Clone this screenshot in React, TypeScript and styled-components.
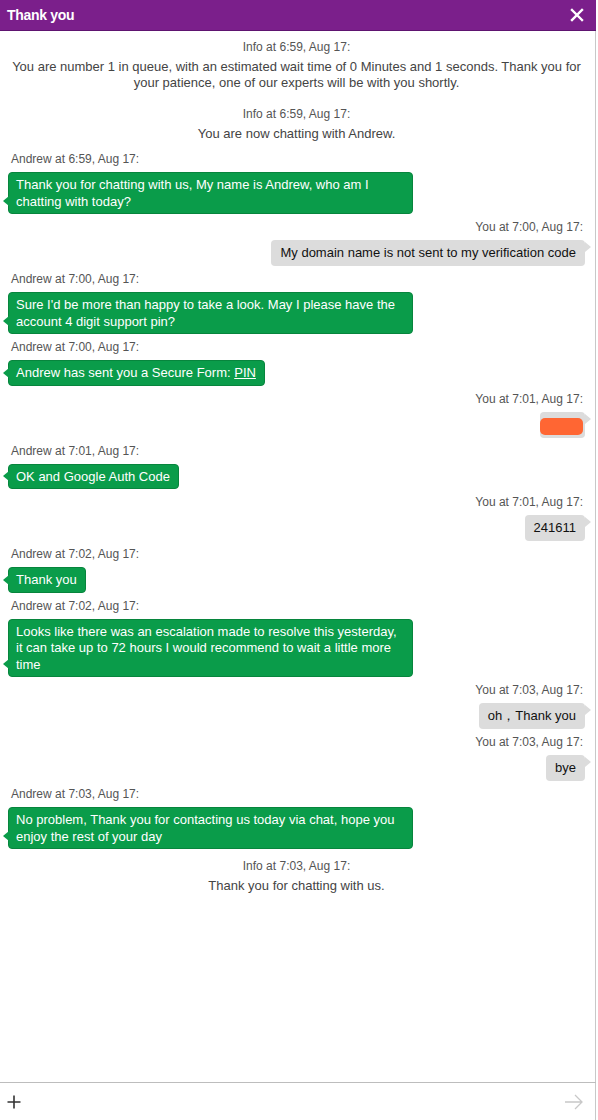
import React from "react";
import styled, { createGlobalStyle } from "styled-components";

const GlobalStyle = createGlobalStyle`
  html, body { margin: 0; padding: 0; background: #fff; }
  body { font-family: "Liberation Sans", Arial, sans-serif; }
  * { box-sizing: border-box; }
`;

const Panel = styled.div`
  width: 596px;
  height: 1120px;
  display: flex;
  flex-direction: column;
  border-right: 1px solid #c8c8c8;
  background: #fff;
`;

const Header = styled.div`
  height: 31px;
  flex: none;
  margin-right: -1px;
  background: #7b1f8b;
  display: flex;
  align-items: center;
  justify-content: space-between;
  padding: 0 12px 0 7px;
  border-bottom: 1px solid #5e1470;
`;

const Title = styled.div`
  color: #fff;
  font-weight: bold;
  font-size: 14px;
  letter-spacing: -0.3px;
`;

const CloseBtn = styled.button`
  border: none;
  background: none;
  padding: 0;
  width: 14px;
  height: 14px;
  display: flex;
  cursor: pointer;
`;

const Messages = styled.div`
  flex: 1;
  display: flex;
  flex-direction: column;
  gap: 5px;
  padding: 4px 10px 0 8px;
`;

const Info = styled.div`
  margin: 4px 0;
  display: flex;
  flex-direction: column;
  gap: 4px;
  align-items: center;
  text-align: center;
  color: #444;
  font-size: 13px;
  line-height: 16px;
  padding: 0 4px;
  & + & {
    margin-top: 6px;
  }
`;

const Label = styled.div<{ $side: "agent" | "you" | "info" }>`
  font-size: 12px;
  line-height: 16px;
  color: #555;
  padding: ${(p) => (p.$side === "agent" ? "0 0 0 3px" : p.$side === "you" ? "0 2px 0 0" : "0")};
`;

const Group = styled.div<{ $side: "agent" | "you" }>`
  display: flex;
  flex-direction: column;
  gap: 5px;
  align-items: ${(p) => (p.$side === "agent" ? "flex-start" : "flex-end")};
`;

const Bubble = styled.div<{ $side: "agent" | "you"; $redacted?: boolean }>`
  position: relative;
  max-width: 405px;
  font-size: 13px;
  border-radius: 4px;
  ${(p) =>
    p.$side === "agent"
      ? `
    line-height: 16.5px;
    background: #0a9c4a;
    border: 1px solid #07853d;
    color: #fff;
    padding: 4px 8px 3px 7px;
  `
      : `
    line-height: 16px;
    background: #dcdcdc;
    color: #111;
    padding: ${p.$redacted ? "6px 2px 3px 0" : "5px 9px 5px 9px"};
  `}
  &::after {
    content: "";
    position: absolute;
    width: 0;
    height: 0;
    border-style: solid;
    ${(p) =>
      p.$side === "agent"
        ? `
      left: -6px;
      bottom: 7px;
      border-width: 5px 6px 5px 0;
      border-color: transparent #0a9c4a transparent transparent;
    `
        : `
      right: -6px;
      top: 2px;
      border-width: 5px 0 5px 6px;
      border-color: transparent transparent transparent #dcdcdc;
    `}
  }
`;

const Redaction = styled.div`
  width: 43px;
  height: 17px;
  border-radius: 5px;
  background: #ff6633;
`;

const Link = styled.a`
  color: #fff;
  text-decoration: underline;
`;

const Footer = styled.div`
  flex: none;
  height: 38px;
  margin-right: -1px;
  border-top: 1px solid #bdbdbd;
  display: flex;
  align-items: center;
  justify-content: space-between;
  padding: 0 12px 0 7px;
`;

const IconBtn = styled.button`
  border: none;
  background: none;
  padding: 0;
  display: flex;
  cursor: pointer;
`;

type Msg =
  | { kind: "info"; time: string; text: string }
  | { kind: "agent"; time: string; text: React.ReactNode }
  | { kind: "you"; time: string; text?: string; redacted?: boolean };

const msgs: Msg[] = [
  {
    kind: "info",
    time: "6:59, Aug 17",
    text:
      "You are number 1 in queue, with an estimated wait time of 0 Minutes and 1 seconds. Thank you for your patience, one of our experts will be with you shortly.",
  },
  { kind: "info", time: "6:59, Aug 17", text: "You are now chatting with Andrew." },
  {
    kind: "agent",
    time: "6:59, Aug 17",
    text: "Thank you for chatting with us, My name is Andrew, who am I chatting with today?",
  },
  { kind: "you", time: "7:00, Aug 17", text: "My domain name is not sent to my verification code" },
  {
    kind: "agent",
    time: "7:00, Aug 17",
    text: "Sure I'd be more than happy to take a look. May I please have the account 4 digit support pin?",
  },
  {
    kind: "agent",
    time: "7:00, Aug 17",
    text: (
      <>
        Andrew has sent you a Secure Form: <Link href="#">PIN</Link>
      </>
    ),
  },
  { kind: "you", time: "7:01, Aug 17", redacted: true },
  { kind: "agent", time: "7:01, Aug 17", text: "OK and Google Auth Code" },
  { kind: "you", time: "7:01, Aug 17", text: "241611" },
  { kind: "agent", time: "7:02, Aug 17", text: "Thank you" },
  {
    kind: "agent",
    time: "7:02, Aug 17",
    text:
      "Looks like there was an escalation made to resolve this yesterday, it can take up to 72 hours I would recommend to wait a little more time",
  },
  { kind: "you", time: "7:03, Aug 17", text: "oh，Thank you" },
  { kind: "you", time: "7:03, Aug 17", text: "bye" },
  {
    kind: "agent",
    time: "7:03, Aug 17",
    text: "No problem, Thank you for contacting us today via chat, hope you enjoy the rest of your day",
  },
  { kind: "info", time: "7:03, Aug 17", text: "Thank you for chatting with us." },
];

export default function App() {
  return (
    <>
      <GlobalStyle />
      <Panel>
        <Header>
          <Title>Thank you</Title>
          <CloseBtn aria-label="Close">
            <svg width="14" height="14" viewBox="0 0 14 14">
              <path d="M2 2 L12 12 M12 2 L2 12" stroke="#fff" strokeWidth="2.4" strokeLinecap="square" />
            </svg>
          </CloseBtn>
        </Header>
        <Messages>
          {msgs.map((m, i) => {
            if (m.kind === "info") {
              return (
                <Info key={i}>
                  <Label $side="info">Info at {m.time}:</Label>
                  <div>{m.text}</div>
                </Info>
              );
            }
            if (m.kind === "agent") {
              return (
                <Group key={i} $side="agent">
                  <Label $side="agent">Andrew at {m.time}:</Label>
                  <Bubble $side="agent">{m.text}</Bubble>
                </Group>
              );
            }
            return (
              <Group key={i} $side="you">
                <Label $side="you">You at {m.time}:</Label>
                <Bubble $side="you" $redacted={m.redacted}>
                  {m.redacted ? <Redaction /> : m.text}
                </Bubble>
              </Group>
            );
          })}
        </Messages>
        <Footer>
          <IconBtn aria-label="Attach">
            <svg width="14" height="14" viewBox="0 0 14 14">
              <path d="M7 0.5 V13.5 M0.5 7 H13.5" stroke="#333" strokeWidth="1.6" />
            </svg>
          </IconBtn>
          <IconBtn aria-label="Send">
            <svg width="20" height="16" viewBox="0 0 20 16">
              <path d="M1 8 H18 M11 1 L18 8 L11 15" stroke="#c8c8c8" strokeWidth="1.3" fill="none" />
            </svg>
          </IconBtn>
        </Footer>
      </Panel>
    </>
  );
}
